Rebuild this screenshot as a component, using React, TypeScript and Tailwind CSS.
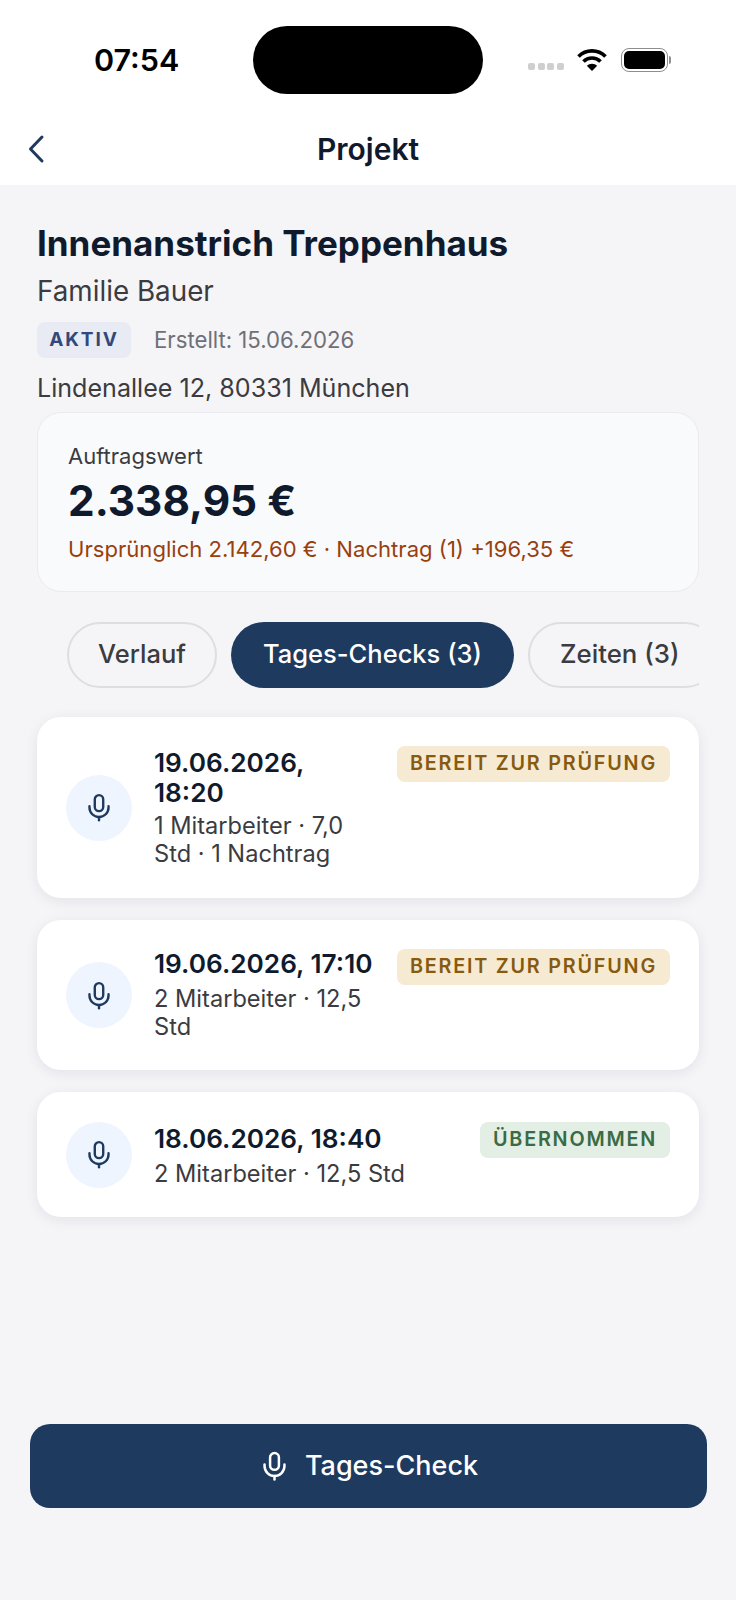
import React from "react";

function Mic({ className }: { className: string }) {
  return (
    <svg viewBox="0 0 24 30" fill="none" stroke="currentColor" strokeWidth="2.6" strokeLinecap="round" className={className}>
      <rect x="7.4" y="1.5" width="9.2" height="17.5" rx="4.6" />
      <path d="M1.6 13.5v1.5a10.4 10.4 0 0 0 20.8 0v-1.5" />
      <path d="M12 25.5v3.5" />
    </svg>
  );
}

function Wifi() {
  return (
    <svg viewBox="0 0 30 24" className="w-[30px] h-[24px]" fill="none" stroke="#000" strokeWidth="3.6">
      <path d="M1.5 8.5a19 19 0 0 1 27 0" />
      <path d="M6.5 13.5a12 12 0 0 1 17 0" />
      <path d="M15 23l-5.2-5.2a7.4 7.4 0 0 1 10.4 0z" fill="#000" stroke="none" />
    </svg>
  );
}

function Battery() {
  return (
    <div className="flex items-center">
      <div className="w-[47px] h-[24px] rounded-[8px] border-[1.5px] border-[#8e8e8e] p-[2px]">
        <div className="w-full h-full rounded-[5px] bg-black" />
      </div>
      <div className="w-[2px] h-[8px] rounded-r-full bg-[#8e8e8e] ml-[1px]" />
    </div>
  );
}

const badgeClass = "rounded-[8px] h-[36px] px-[13px] flex items-center text-[19.8px] font-semibold tracking-[0.09em] whitespace-nowrap leading-none";

function CheckCard({
  date,
  meta,
  status,
  tone,
  className,
  topClass,
  metaClass,
  badgeTop,
}: {
  date: React.ReactNode;
  meta: React.ReactNode;
  status: string;
  tone: string;
  className: string;
  topClass: string;
  metaClass: string;
  badgeTop: string;
}) {
  return (
    <div className={`bg-white rounded-[24px] shadow-[0_3px_14px_rgba(20,30,50,0.08)] px-[29px] flex items-center ${className}`}>
      <div className="w-[66px] h-[66px] rounded-full bg-[#eef5fe] flex items-center justify-center shrink-0 text-[#1e3a5f]">
        <Mic className="w-[22px] h-[29px]" />
      </div>
      <div className={`ml-[22px] flex-1 min-w-0 self-start pr-[18px] ${topClass}`}>
        <div className="text-[26.2px] leading-[30px] font-semibold text-[#0f1b2d]">{date}</div>
        <div className={`text-[23.6px] leading-[28px] text-[#3b3b40] ${metaClass}`}>{meta}</div>
      </div>
      <div className={`shrink-0 self-start flex justify-end ${badgeTop}`}>
        <div className={`${badgeClass} ${tone}`}>{status}</div>
      </div>
    </div>
  );
}

export default function App() {
  return (
    <div className="w-[736px] h-[1600px] bg-[#f5f5f8] flex flex-col font-['Inter',sans-serif] overflow-hidden">
      <div className="bg-white h-[185px] shrink-0 flex flex-col">
        <div className="h-[119px] flex items-start">
          <div className="w-[253px] pl-[94px] pt-[41px] text-[30.5px] leading-[38px] font-semibold text-black">07:54</div>
          <div className="w-[230px] h-[68px] mt-[26px] rounded-[34px] bg-black" />
          <div className="flex items-center pl-[45px] pt-[48px]">
            <div className="flex gap-[2.5px] mt-[13px]">
              <span className="w-[7px] h-[7px] rounded-[2px] bg-[#cfcfcf]" />
              <span className="w-[7px] h-[7px] rounded-[2px] bg-[#cfcfcf]" />
              <span className="w-[7px] h-[7px] rounded-[2px] bg-[#cfcfcf]" />
              <span className="w-[7px] h-[7px] rounded-[2px] bg-[#cfcfcf]" />
            </div>
            <div className="ml-[13px] mr-[14px]">
              <Wifi />
            </div>
            <Battery />
          </div>
        </div>
        <div className="relative h-[66px] flex items-start justify-center">
          <svg viewBox="0 0 20 30" className="absolute left-[26px] top-[15px] w-[20px] h-[30px]" fill="none" stroke="#1e3a5f" strokeWidth="3" strokeLinecap="round" strokeLinejoin="round">
            <path d="M16 3L4.5 15 16 27" />
          </svg>
          <div className="text-[30px] leading-[36px] font-semibold text-[#0f1b2d] mt-[12px]">Projekt</div>
        </div>
      </div>

      <div className="flex-1 flex flex-col">
        <div className="px-[37px] pt-[35px]">
          <div className="text-[35px] leading-[46px] font-bold text-[#0f1b2d]">Innenanstrich Treppenhaus</div>
          <div className="text-[27.8px] leading-[34px] text-[#3b3b40] mt-[8px]">Familie Bauer</div>
          <div className="flex items-center mt-[14px]">
            <div className="rounded-[8px] h-[36px] w-[94px] bg-[#e8ebf4] text-[#33477a] flex items-center justify-center text-[19px] font-bold tracking-[0.1em]">AKTIV</div>
            <div className="ml-[23px] text-[22.2px] text-[#6f7076]">Erstellt: 15.06.2026</div>
          </div>
          <div className="text-[25.1px] leading-[32px] text-[#3b3b40] mt-[14px]">Lindenallee 12, 80331 München</div>
        </div>

        <div className="mx-[37px] mt-[8px] h-[180px] rounded-[24px] bg-[#f9fafc] border border-[#ebebef] px-[30px] pt-[29px]">
          <div className="text-[22px] leading-[28px] text-[#3b3b40]">Auftragswert</div>
          <div className="text-[42.3px] leading-[56px] font-bold text-[#0f1b2d] mt-[3px]">2.338,95 €</div>
          <div className="text-[22.1px] leading-[28px] text-[#9a3f0e] mt-[6px]">Ursprünglich 2.142,60 € · Nachtrag (1) +196,35 €</div>
        </div>

        <div className="mx-[37px] mt-[30px] overflow-hidden flex gap-[14px] pl-[30px]">
          <div className="h-[66px] w-[150px] shrink-0 rounded-[33px] border-2 border-[#dedee1] flex items-center justify-center text-[25.5px] font-[550] text-[#3b3b40] pb-[2px]">Verlauf</div>
          <div className="h-[66px] w-[283px] shrink-0 rounded-[33px] bg-[#1e3a5f] flex items-center justify-center text-[25.5px] font-[550] text-white pb-[2px]">Tages-Checks (3)</div>
          <div className="h-[66px] w-[190px] shrink-0 rounded-[33px] border-2 border-[#dedee1] flex items-center justify-start pl-[30px] text-[25.8px] font-[550] text-[#3b3b40] whitespace-nowrap pb-[2px]">Zeiten (3)</div>
        </div>

        <div className="mx-[37px] mt-[29px] flex flex-col gap-[22px]">
          <CheckCard
            className="h-[181px]"
            topClass="pt-[31px]"
            metaClass="mt-[4px]"
            badgeTop="pt-[29px]"
            date="19.06.2026, 18:20"
            meta="1 Mitarbeiter · 7,0 Std · 1 Nachtrag"
            status="BEREIT ZUR PRÜFUNG"
            tone="bg-[#f6ead3] text-[#875a0f]"
          />
          <CheckCard
            className="h-[150px]"
            topClass="pt-[29px]"
            metaClass="mt-[6px]"
            badgeTop="pt-[29px]"
            date="19.06.2026, 17:10"
            meta="2 Mitarbeiter · 12,5 Std"
            status="BEREIT ZUR PRÜFUNG"
            tone="bg-[#f6ead3] text-[#875a0f]"
          />
          <CheckCard
            className="h-[125px]"
            topClass="pt-[32px]"
            metaClass="mt-[6px]"
            badgeTop="pt-[30px]"
            date="18.06.2026, 18:40"
            meta="2 Mitarbeiter · 12,5 Std"
            status="ÜBERNOMMEN"
            tone="bg-[#e3eee4] text-[#3a6b45]"
          />
        </div>

        <div className="mt-auto mb-[92px] mx-[29.5px] h-[84px] rounded-[20px] bg-[#1e3a5f] flex items-center justify-center gap-[19px] text-white pl-[5px]">
          <Mic className="w-[23px] h-[30px]" />
          <span className="text-[27px] font-medium">Tages-Check</span>
        </div>
      </div>
    </div>
  );
}
